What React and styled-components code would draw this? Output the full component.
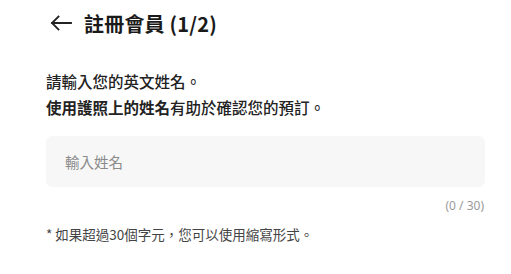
import React from "react";
import styled, { createGlobalStyle } from "styled-components";

const GlobalStyle = createGlobalStyle`
  html, body {
    margin: 0;
    padding: 0;
    background: #ffffff;
  }
  body {
    font-family: "Noto Sans CJK TC", "Noto Sans", sans-serif;
    color: #222;
  }
`;

const Page = styled.div`
  width: 511px;
  padding: 0 26px 0 46px;
  box-sizing: border-box;
`;

const Header = styled.header`
  display: flex;
  align-items: center;
  height: 46px;
  padding-left: 4px;
`;

const BackButton = styled.button`
  display: flex;
  align-items: center;
  border: none;
  background: none;
  padding: 0;
  margin-right: 12px;
  color: #222;
  cursor: pointer;
`;

const Title = styled.h1`
  margin: 0;
  font-size: 20px;
  font-weight: 700;
  color: #1a1a1a;
  letter-spacing: 0.2px;
`;

const Intro = styled.p`
  margin: 22px 0 0;
  font-size: 15.5px;
  line-height: 26px;
  font-weight: 500;
  color: #222;
`;

const Strong = styled.strong`
  font-weight: 700;
`;

const Field = styled.div`
  margin-top: 16px;
`;

const NameInput = styled.input`
  display: block;
  width: 100%;
  box-sizing: border-box;
  height: 51px;
  border: none;
  border-radius: 6px;
  background: #f7f7f7;
  padding: 0 19px;
  font-family: "Noto Sans CJK TC", "Noto Sans", sans-serif;
  font-size: 14.5px;
  color: #222;
  caret-color: #000;
  outline: none;
  &::placeholder {
    color: #8a8a8a;
  }
`;

const Counter = styled.div`
  text-align: right;
  margin-top: 10px;
  padding-right: 1px;
  font-size: 12px;
  color: #9a9a9a;
  font-family: "Noto Sans", "Noto Sans CJK TC", sans-serif;
`;

const Note = styled.p`
  margin: 10px 0 0;
  font-size: 13.5px;
  color: #444;
`;

const ArrowIcon = () => (
  <svg width="22" height="16" viewBox="0 0 22 16" fill="none">
    <path
      d="M21 8H2M8.5 1.5L2 8l6.5 6.5"
      stroke="#222"
      strokeWidth="1.8"
      strokeLinecap="square"
    />
  </svg>
);

export default function App() {
  return (
    <>
      <GlobalStyle />
      <Page>
        <Header>
          <BackButton aria-label="返回">
            <ArrowIcon />
          </BackButton>
          <Title>註冊會員 (1/2)</Title>
        </Header>
        <Intro>
          請輸入您的英文姓名。
          <br />
          <Strong>使用護照上的姓名</Strong>有助於確認您的預訂。
        </Intro>
        <Field>
          <NameInput type="text" placeholder="輸入姓名" maxLength={30} autoFocus />
          <Counter>(0 / 30)</Counter>
        </Field>
        <Note>* 如果超過30個字元，您可以使用縮寫形式。</Note>
      </Page>
    </>
  );
}
